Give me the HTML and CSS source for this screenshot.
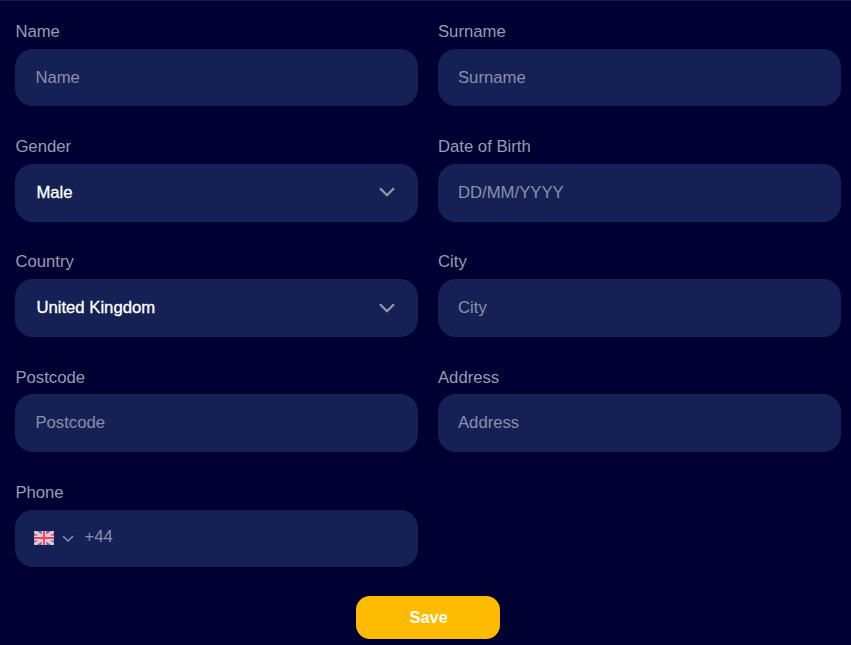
FILE: index.html
```html
<!DOCTYPE html>
<html lang="en">
<head>
  <meta charset="UTF-8">
  <meta name="viewport" content="width=device-width, initial-scale=1.0">
  <title>Profile</title>
  <link rel="stylesheet" href="styles.css">
</head>
<body>
  <form class="profile-form">
    <div class="form-grid">
      <div class="field">
        <label for="name">Name</label>
        <input id="name" type="text" placeholder="Name">
      </div>
      <div class="field">
        <label for="surname">Surname</label>
        <input id="surname" type="text" placeholder="Surname">
      </div>
      <div class="field">
        <label for="gender">Gender</label>
        <div class="select-wrap">
          <select id="gender">
            <option>Male</option>
            <option>Female</option>
          </select>
          <svg class="chevron" viewBox="0 0 16 10" width="16" height="10"><path d="M1 1.2l7 7 7-7" fill="none" stroke="currentColor" stroke-width="2.3"/></svg>
        </div>
      </div>
      <div class="field">
        <label for="dob">Date of Birth</label>
        <input id="dob" type="text" placeholder="DD/MM/YYYY">
      </div>
      <div class="field">
        <label for="country">Country</label>
        <div class="select-wrap">
          <select id="country">
            <option>United Kingdom</option>
            <option>Ireland</option>
          </select>
          <svg class="chevron" viewBox="0 0 16 10" width="16" height="10"><path d="M1 1.2l7 7 7-7" fill="none" stroke="currentColor" stroke-width="2.3"/></svg>
        </div>
      </div>
      <div class="field">
        <label for="city">City</label>
        <input id="city" type="text" placeholder="City">
      </div>
      <div class="field">
        <label for="postcode">Postcode</label>
        <input id="postcode" type="text" placeholder="Postcode">
      </div>
      <div class="field">
        <label for="address">Address</label>
        <input id="address" type="text" placeholder="Address">
      </div>
      <div class="field">
        <label for="phone">Phone</label>
        <div class="phone-box">
          <svg class="flag" viewBox="0 0 60 40" width="20" height="14" preserveAspectRatio="none">
            <rect width="60" height="40" fill="#6a74b4"/>
            <path d="M0 0l60 40M60 0L0 40" stroke="#f6eef2" stroke-width="8"/>
            <path d="M0 0l60 40M60 0L0 40" stroke="#f0788c" stroke-width="2.5"/>
            <path d="M30 0v40M0 20h60" stroke="#f8f0f4" stroke-width="13"/>
            <path d="M30 0v40M0 20h60" stroke="#f2475c" stroke-width="7"/>
          </svg>
          <svg class="chevron-small" viewBox="0 0 12 7" width="12" height="7"><path d="M1 1l5 5 5-5" fill="none" stroke="currentColor" stroke-width="1.3"/></svg>
          <input id="phone" type="tel" placeholder="+44">
        </div>
      </div>
    </div>
    <button class="save-btn" type="button">Save</button>
  </form>
</body>
</html>
```

FILE: styles.css
```css
* {
  box-sizing: border-box;
}

html, body {
  margin: 0;
  padding: 0;
  height: 100%;
}

body {
  background-color: #000033;
  border-top: 1px solid #151f55;
  font-family: "Liberation Sans", Arial, sans-serif;
  font-size: 16.7px;
  overflow: hidden;
}

.profile-form {
  padding: 22px 10px 0 15.4px;
}

.form-grid {
  display: grid;
  grid-template-columns: 402.6px 403px;
  column-gap: 20px;
  row-gap: 31.85px;
}

.field label {
  display: block;
  height: 18px;
  line-height: 18px;
  margin-bottom: 7.75px;
  color: #9a9bb0;
}

.field input,
.field select {
  display: block;
  width: 100%;
  height: 57.6px;
  padding: 0 20px;
  border: none;
  border-radius: 18px;
  background-color: #152155;
  color: #fff;
  font-family: inherit;
  font-size: 16.7px;
  outline: none;
}

.field input::placeholder {
  color: #8c8fa9;
  opacity: 1;
}

.field select {
  appearance: none;
  -webkit-appearance: none;
  padding: 0 20px 1px 21px;
  font-weight: 500;
  -webkit-text-stroke: 0.3px #fff;
}

.select-wrap {
  position: relative;
}

.chevron {
  position: absolute;
  right: 23px;
  top: 23.5px;
  color: #9598a8;
  pointer-events: none;
}

.phone-box {
  display: flex;
  align-items: center;
  height: 57.6px;
  padding-left: 19px;
  border-radius: 18px;
  background-color: #152155;
}

.flag {
  flex: none;
}

.chevron-small {
  flex: none;
  margin-left: 8px;
  color: #9598a8;
}

.phone-box input {
  flex: 1;
  height: 100%;
  padding: 0 0 3px 10px;
  background: none;
  border-radius: 0;
}

.save-btn {
  display: block;
  width: 144px;
  height: 43px;
  margin: 28.85px auto 0;
  padding: 0 0 0 1px;
  border: none;
  border-radius: 14px;
  background-color: #ffbb00;
  color: #fff;
  font-family: inherit;
  font-size: 16.4px;
  font-weight: 700;
  cursor: pointer;
}
```
